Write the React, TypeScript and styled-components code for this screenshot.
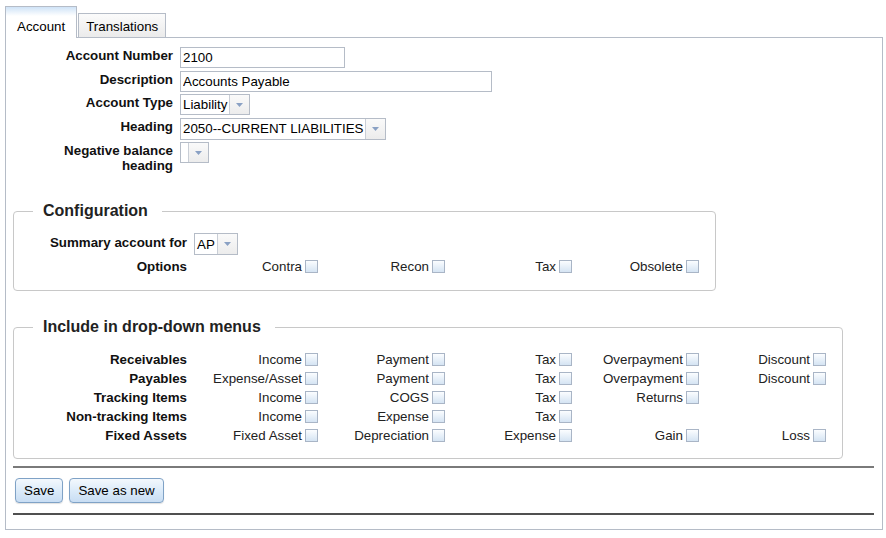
import styled, { createGlobalStyle } from 'styled-components';

const GlobalStyle = createGlobalStyle`
  body {
    margin: 0;
    background: #fff;
    font-family: "Liberation Sans", Arial, sans-serif;
    font-size: 13.33px;
    color: #000;
  }
`;

type Option = { label: string } | null;

const menuRows: { name: string; options: Option[] }[] = [
  {
    name: 'Receivables',
    options: [{ label: 'Income' }, { label: 'Payment' }, { label: 'Tax' }, { label: 'Overpayment' }, { label: 'Discount' }],
  },
  {
    name: 'Payables',
    options: [
      { label: 'Expense/Asset' },
      { label: 'Payment' },
      { label: 'Tax' },
      { label: 'Overpayment' },
      { label: 'Discount' },
    ],
  },
  {
    name: 'Tracking Items',
    options: [{ label: 'Income' }, { label: 'COGS' }, { label: 'Tax' }, { label: 'Returns' }, null],
  },
  {
    name: 'Non-tracking Items',
    options: [{ label: 'Income' }, { label: 'Expense' }, { label: 'Tax' }, null, null],
  },
  {
    name: 'Fixed Assets',
    options: [{ label: 'Fixed Asset' }, { label: 'Depreciation' }, { label: 'Expense' }, { label: 'Gain' }, { label: 'Loss' }],
  },
];

function Select({ value, height = 21 }: { value: string; height?: number }) {
  return (
    <SelectBox $height={height}>
      <SelectValue>{value}</SelectValue>
      <SelectArrow>
        <svg width="7" height="4" viewBox="0 0 7 4">
          <path d="M0 0 L7 0 L3.5 4 Z" fill="#8aa1c4" />
        </svg>
      </SelectArrow>
    </SelectBox>
  );
}

function CheckOption({ label }: { label: string }) {
  return (
    <OptionCell>
      <span>{label}</span>
      <Checkbox type="checkbox" />
    </OptionCell>
  );
}

export default function App() {
  return (
    <Page>
      <GlobalStyle />
      <TabStrip>
        <Tab $active>Account</Tab>
        <Tab>Translations</Tab>
      </TabStrip>
      <Panel>
        <FieldGrid>
          <Label>Account Number</Label>
          <TextInput $width={165} defaultValue="2100" />
          <Label>Description</Label>
          <TextInput $width={312} defaultValue="Accounts Payable" />
          <Label>Account Type</Label>
          <Select value="Liability" />
          <Label>Heading</Label>
          <Select value="2050--CURRENT LIABILITIES" height={22} />
          <Label>Negative balance heading</Label>
          <Select value="" />
        </FieldGrid>

        <Fieldset $top={13}>
          <Legend>Configuration</Legend>
          <OptionGrid $columns={4} $rowGap={2}>
            <RowLabel $top>Summary account for</RowLabel>
            <SummaryCell>
              <Select value="AP" height={22} />
            </SummaryCell>
            <RowLabel>Options</RowLabel>
            <CheckOption label="Contra" />
            <CheckOption label="Recon" />
            <CheckOption label="Tax" />
            <CheckOption label="Obsolete" />
          </OptionGrid>
        </Fieldset>

        <Fieldset $gap={27} $bottom={13}>
          <Legend>Include in drop-down menus</Legend>
          <OptionGrid $columns={5} $rowGap={0}>
            {menuRows.map((row) => (
              <Row key={row.name}>
                <RowLabel>{row.name}</RowLabel>
                {row.options.map((opt, i) =>
                  opt ? <CheckOption key={i} label={opt.label} /> : <span key={i} />
                )}
              </Row>
            ))}
          </OptionGrid>
        </Fieldset>

        <Rule />
        <ButtonRow>
          <Button>Save</Button>
          <Button>Save as new</Button>
        </ButtonRow>
        <Rule $dark />
      </Panel>
    </Page>
  );
}

const Page = styled.div`
  padding: 6px 0 0 5px;
  width: 878px;
`;

const TabStrip = styled.div`
  display: flex;
  align-items: flex-end;
  gap: 1px;
  height: 31px;
  position: relative;
  z-index: 1;
`;

const Tab = styled.div<{ $active?: boolean }>`
  box-sizing: border-box;
  border: 1px solid #b5bcc7;
  border-bottom: none;
  line-height: 15px;
  color: #000;
  height: ${(p) => (p.$active ? '32px' : '24px')};
  margin-bottom: ${(p) => (p.$active ? '-1px' : '0')};
  padding: ${(p) => (p.$active ? '12px 11px 0' : '5px 7px 0')};
  background: ${(p) =>
    p.$active
      ? 'linear-gradient(to bottom, #cfe3f7 0px, #ffffff 9px)'
      : 'linear-gradient(to bottom, #fbfbfb 0%, #ebebeb 100%)'};
`;

const Panel = styled.div`
  box-sizing: border-box;
  border: 1px solid #b5bcc7;
  padding: 9px 0 14px;
  background: #fff;
`;

const FieldGrid = styled.div`
  display: grid;
  grid-template-columns: 112px auto;
  column-gap: 7px;
  row-gap: 2.5px;
  margin-left: 55px;
  justify-items: start;
  align-items: start;
`;

const Label = styled.label`
  justify-self: stretch;
  text-align: right;
  font-weight: bold;
  line-height: 15px;
  padding-top: 1px;
  color: #111;
`;

const TextInput = styled.input<{ $width: number }>`
  box-sizing: border-box;
  width: ${(p) => p.$width}px;
  height: 21px;
  margin: 0;
  border: 1px solid #b5bcc7;
  padding: 0 3px 0 2px;
  font-family: inherit;
  font-size: 13.33px;
  color: #000;
  outline: none;
`;

const SelectBox = styled.div<{ $height: number }>`
  box-sizing: border-box;
  display: inline-flex;
  height: ${(p) => p.$height}px;
  border: 1px solid #b5bcc7;
  background: #fff;
`;

const SelectValue = styled.span`
  display: flex;
  align-items: center;
  min-width: 3px;
  padding: 0 2px 0 2px;
  white-space: nowrap;
  color: #000;
`;

const SelectArrow = styled.span`
  display: flex;
  align-items: center;
  justify-content: center;
  width: 19px;
  border-left: 1px solid #c9ced6;
  background: linear-gradient(to bottom, #fafafa 0%, #ececec 100%);
`;

const Fieldset = styled.fieldset<{ $gap?: number; $top?: number; $bottom?: number }>`
  width: fit-content;
  min-width: 0;
  margin: ${(p) => p.$gap ?? 29}px 0 0 7px;
  padding: ${(p) => p.$top ?? 14}px 14px ${(p) => p.$bottom ?? 14}px 0;
  border: 1px solid #c8c8c8;
  border-radius: 4px;
`;

const Legend = styled.legend`
  margin-left: 19px;
  padding: 0 14px 0 10px;
  font-size: 16px;
  font-weight: bold;
  line-height: 18px;
  color: #222;
`;

const OptionGrid = styled.div<{ $columns: number; $rowGap: number }>`
  display: grid;
  grid-template-columns: 146px repeat(${(p) => p.$columns}, 127px);
  grid-auto-rows: minmax(19px, auto);
  row-gap: ${(p) => p.$rowGap}px;
  margin-left: 33px;
  align-items: center;
`;

const Row = styled.div`
  display: contents;
`;

const RowLabel = styled.div<{ $top?: boolean }>`
  align-self: ${(p) => (p.$top ? 'start' : 'center')};
  padding: ${(p) => (p.$top ? '2px' : '0')} 6px 0 0;
  text-align: right;
  font-weight: bold;
  line-height: 15px;
  color: #111;
`;

const SummaryCell = styled.div`
  grid-column: 2 / -1;
  padding-left: 1px;
`;

const OptionCell = styled.label`
  display: flex;
  justify-content: flex-end;
  align-items: center;
  gap: 3px;
  padding-right: 2px;
  line-height: 15px;
  color: #222;
`;

const Checkbox = styled.input`
  appearance: none;
  box-sizing: border-box;
  width: 13px;
  height: 13px;
  margin: 0;
  border: 1px solid #a9b5c6;
  background: linear-gradient(to bottom, #fbfdff 0%, #d5e4f3 100%);
`;

const Rule = styled.hr<{ $dark?: boolean }>`
  height: 0;
  margin: ${(p) => (p.$dark ? '10px' : '7px')} 8px 0 7px;
  border: 0;
  border-top: 2px solid ${(p) => (p.$dark ? '#505050' : '#7a7a7a')};
`;

const ButtonRow = styled.div`
  display: flex;
  gap: 6px;
  margin: 10px 0 0 9px;
`;

const Button = styled.button`
  box-sizing: border-box;
  height: 25px;
  padding: 0 8px;
  border: 1px solid #7fa2c6;
  border-radius: 4px;
  background: linear-gradient(to bottom, #f3f8fd 0%, #dcebf9 50%, #c8ddf3 100%);
  box-shadow: 0 1px 1px rgba(0, 0, 0, 0.12);
  font-family: inherit;
  font-size: 13.33px;
  color: #000;
`;
